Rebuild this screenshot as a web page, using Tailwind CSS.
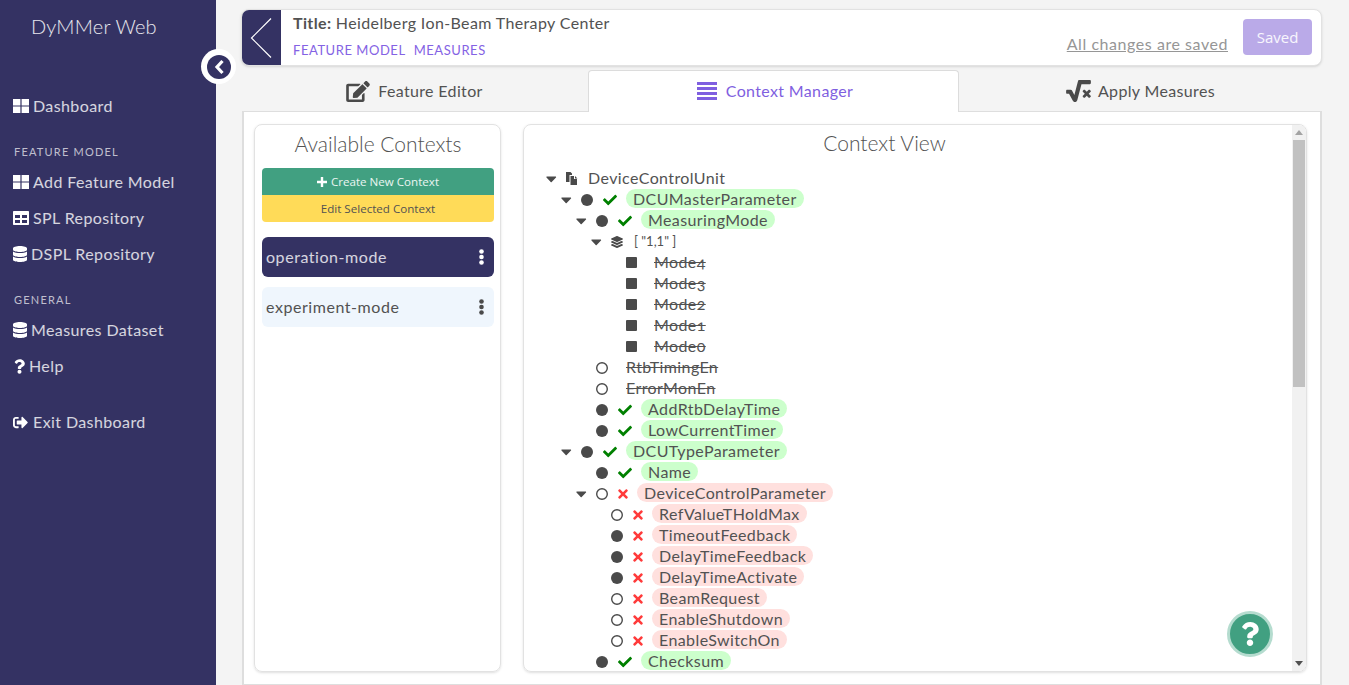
<!DOCTYPE html>
<html lang="en">
<head>
  <meta charset="UTF-8"/>
  <title>DyMMer Web</title>
  <script src="https://cdn.jsdelivr.net/npm/@tailwindcss/browser@4"></script>
</head>
<body class="bg-[#f4f4f4] text-[#525252] font-['Lato',sans-serif] tracking-[0.4px] h-screen overflow-hidden">

  <svg class="hidden">
    <symbol id="check" viewBox="0 0 512 512"><path fill="#008000" d="M173.898 439.404l-166.4-166.4c-9.997-9.997-9.997-26.206 0-36.204l36.203-36.204c9.997-9.998 26.207-9.998 36.204 0L192 312.69 432.095 72.596c9.997-9.997 26.207-9.997 36.204 0l36.203 36.204c9.997 9.997 9.997 26.206 0 36.204l-294.4 294.401c-9.998 9.997-26.207 9.997-36.204-.001z"/></symbol>
    <symbol id="times" viewBox="0 0 352 512"><path fill="#ff3b3b" d="M242.72 256l100.07-100.07c12.28-12.28 12.28-32.19 0-44.48l-22.24-22.24c-12.28-12.28-32.19-12.28-44.48 0L176 189.28 75.93 89.21c-12.28-12.28-32.19-12.28-44.48 0L9.21 111.45c-12.28 12.28-12.28 32.19 0 44.48L109.28 256 9.21 356.07c-12.28 12.28-12.28 32.19 0 44.48l22.24 22.24c12.28 12.28 32.2 12.28 44.48 0L176 322.72l100.07 100.07c12.28 12.28 32.2 12.28 44.48 0l22.24-22.24c12.28-12.28 12.28-32.19 0-44.48L242.72 256z"/></symbol>
    <symbol id="caret" viewBox="0 0 14 14"><path fill="#4a4a4a" d="M3 4.5h8.500c.6 0 .9.7.5 1.100L7.700 9.900c-.3.3-.7.300-1 0L2.500 5.600c-.4-.4-.1-1.100.5-1.100z"/></symbol>
    <symbol id="full" viewBox="0 0 12 12"><circle cx="6" cy="6" r="6" fill="#4a4a4a"/></symbol>
    <symbol id="empty" viewBox="0 0 12 12"><circle cx="6" cy="6" r="5.300" fill="none" stroke="#4a4a4a" stroke-width="1.400"/></symbol>
    <symbol id="database" viewBox="0 0 448 512"><path fill="#fff" d="M448 73.143v45.714C448 159.143 347.667 192 224 192S0 159.143 0 118.857V73.143C0 32.857 100.333 0 224 0s224 32.857 224 73.143zM448 176v102.857C448 319.143 347.667 352 224 352S0 319.143 0 278.857V176c48.125 33.143 136.208 48.572 224 48.572S399.874 209.143 448 176zm0 160v102.857C448 479.143 347.667 512 224 512S0 479.143 0 438.857V336c48.125 33.143 136.208 48.572 224 48.572S399.874 369.143 448 336z"/></symbol>
    <symbol id="grid" viewBox="0 0 16 14"><path fill="#fff" d="M0 0h7.400v6.600H0zM8.600 0H16v6.600H8.600zM0 7.400h7.400V14H0zM8.600 7.400H16V14H8.600z"/></symbol>
  </svg>

  <div class="flex h-full relative">
    <!-- Sidebar -->
    <aside class="w-[216px] shrink-0 bg-[#343263] text-white/80">
      <div class="h-[54px] pb-[2px] flex items-center pl-[31px] text-[20px] font-light text-white/90 tracking-[0.2px]">DyMMer Web</div>
      <nav class="mt-[34px] text-[16px]">
        <a class="h-[36px] flex items-center pl-[13px] gap-[4px]"><svg class="w-[16px] h-[14px]"><use href="#grid"/></svg>Dashboard</a>
        <div class="mt-[16px] h-[24px] flex items-center pl-[14px] text-[11px] tracking-[1.2px] text-white/70">FEATURE MODEL</div>
        <a class="h-[36px] flex items-center pl-[13px] gap-[4px]"><svg class="w-[16px] h-[14px]"><use href="#grid"/></svg>Add Feature Model</a>
        <a class="h-[36px] flex items-center pl-[13px] gap-[4px]">
          <svg class="w-[16px] h-[14px]" viewBox="0 0 16 14"><path fill="#fff" fill-rule="evenodd" d="M1 0h14c.6 0 1 .4 1 1v12c0 .6-.4 1-1 1H1c-.6 0-1-.4-1-1V1c0-.6.4-1 1-1zM2 4v3h5V4zM9 4v3h5V4zM2 9v3h5V9zM9 9v3h5V9z"/></svg>SPL Repository</a>
        <a class="h-[36px] flex items-center pl-[13px] gap-[4px]"><svg class="w-[14px] h-[16px]"><use href="#database"/></svg>DSPL Repository</a>
        <div class="mt-[16px] h-[24px] flex items-center pl-[14px] text-[11px] tracking-[1.2px] text-white/70">GENERAL</div>
        <a class="h-[36px] flex items-center pl-[13px] gap-[4px]"><svg class="w-[14px] h-[16px]"><use href="#database"/></svg>Measures Dataset</a>
        <a class="h-[36px] flex items-center pl-[14px] gap-[4px]">
          <svg class="w-[11px] h-[15px]" viewBox="0 0 384 512"><path fill="#fff" d="M202.021 0C122.202 0 70.503 32.703 29.914 91.026c-7.363 10.58-5.093 25.086 5.178 32.874l43.138 32.709c10.373 7.865 25.132 6.026 33.253-4.148 25.049-31.381 43.63-49.449 82.757-49.449 30.764 0 68.816 19.799 68.816 49.631 0 22.552-18.617 34.134-48.993 51.164-35.423 19.86-82.299 44.576-82.299 106.405V320c0 13.255 10.745 24 24 24h72.471c13.255 0 24-10.745 24-24v-5.773c0-42.86 125.268-44.645 125.268-160.627C377.504 66.256 286.902 0 202.021 0zM192 373.459c-38.196 0-69.271 31.075-69.271 69.271 0 38.195 31.075 69.27 69.271 69.27s69.271-31.075 69.271-69.271-31.075-69.27-69.271-69.27z"/></svg>Help</a>
        <a class="mt-[20px] h-[36px] flex items-center pl-[13px] gap-[5px]">
          <svg class="w-[15px] h-[15px]" viewBox="0 0 512 512"><path fill="#fff" d="M497 273L329 441c-15 15-41 4.500-41-17v-96H152c-13.300 0-24-10.700-24-24v-96c0-13.300 10.700-24 24-24h136V88c0-21.400 25.900-32 41-17l168 168c9.300 9.400 9.300 24.600 0 34zM192 436v-40c0-6.600-5.400-12-12-12H96c-17.700 0-32-14.300-32-32V160c0-17.700 14.300-32 32-32h84c6.600 0 12-5.400 12-12V76c0-6.600-5.400-12-12-12H96c-53 0-96 43-96 96v192c0 53 43 96 96 96h84c6.600 0 12-5.400 12-12z"/></svg>Exit Dashboard</a>
      </nav>
    </aside>

    <!-- Sidebar toggle -->
    <div class="absolute left-[201px] top-[49px] w-[35px] h-[35px] rounded-full bg-white flex items-center justify-center">
      <div class="w-[24px] h-[24px] rounded-full bg-[#343263] flex items-center justify-center">
        <svg class="w-[14px] h-[16px]" viewBox="0 0 14 16"><path fill="none" stroke="#fff" stroke-width="3.200" d="M10.500 2L5 8l5.500 6"/></svg>
      </div>
    </div>

    <main class="flex-1 min-w-0 pl-[25px] pr-[27px] pt-[9px] flex flex-col">
      <!-- Header card -->
      <header class="h-[57px] shrink-0 bg-white border border-[#e2e2e2] rounded-lg shadow-sm flex overflow-hidden">
        <div class="w-[39px] pr-[2px] shrink-0 bg-[#343263] flex items-center justify-center">
          <svg class="w-[24px] h-[42px]" viewBox="0 0 24 42"><path fill="none" stroke="#fff" stroke-width="1.200" d="M22 1.500L2.500 21 22 40.500"/></svg>
        </div>
        <div class="flex-1 pl-[12px] pt-[3px]">
          <div class="text-[16px] leading-[20px] tracking-[0.37px]"><span class="font-bold">Title:</span> Heidelberg Ion-Beam Therapy Center</div>
          <div class="mt-[9px] flex gap-[8px] text-[13px] leading-[16px] tracking-[0.55px] text-[#8462e4]"><span>FEATURE MODEL</span><span>MEASURES</span></div>
        </div>
        <div class="flex items-start">
          <span class="mt-[24px] text-[16px] leading-[20px] underline text-[#969696] tracking-[0.55px]">All changes are saved</span>
          <button class="mt-[9px] ml-[15px] mr-[9px] w-[69px] h-[36px] rounded bg-[#baaae8] text-white/90 text-[15px] tracking-normal font-['Open_Sans',sans-serif]">Saved</button>
        </div>
      </header>

      <!-- Tabs -->
      <div class="mt-[4px] h-[42px] shrink-0 flex text-[16px] tracking-[0.35px] relative z-10">
        <div class="w-[347px] flex items-center justify-center gap-[8px]">
          <svg class="w-[24px] h-[21px]" viewBox="0 0 576 512"><path fill="#4a4a4a" d="M402.6 83.2l90.2 90.2c3.800 3.800 3.800 10 0 13.800L274.400 405.600l-92.800 10.300c-12.400 1.400-22.900-9.100-21.500-21.500l10.300-92.800L388.800 83.200c3.800-3.800 10-3.800 13.800 0zm162-22.900l-48.800-48.800c-15.200-15.200-39.900-15.200-55.200 0l-35.400 35.400c-3.800 3.800-3.800 10 0 13.800l90.200 90.200c3.800 3.800 10 3.800 13.800 0l35.400-35.400c15.200-15.300 15.200-40 0-55.200zM384 346.200V448H64V128h229.800c3.200 0 6.200-1.300 8.500-3.500l40-40c7.600-7.600 2.200-20.500-8.500-20.500H48C21.500 64 0 85.500 0 112v352c0 26.500 21.500 48 48 48h352c26.500 0 48-21.500 48-48V306.200c0-10.700-12.900-16-20.500-8.500l-40 40c-2.200 2.300-3.500 5.300-3.500 8.500z"/></svg>
          <span>Feature Editor</span>
        </div>
        <div class="w-[371px] pb-[2px] pl-[3px] bg-white border border-b-0 border-[#dcdcdc] rounded-t flex items-center justify-center gap-[9px] text-[#7f5fe0]">
          <svg class="w-[20px] h-[20px]" viewBox="0 0 20 20"><path fill="#7f5fe0" d="M0 1h20v3H0zM0 6h20v3H0zM0 11h20v3H0zM0 16h20v3H0z"/></svg>
          <span>Context Manager</span>
        </div>
        <div class="flex-1 flex items-center justify-center gap-[7px]">
          <svg class="w-[25px] h-[22px]" viewBox="0 0 576 512"><path fill="#4a4a4a" d="M571.31 251.31l-22.62-22.62c-6.25-6.25-16.38-6.25-22.63 0L480 274.75l-46.06-46.06c-6.25-6.25-16.38-6.25-22.63 0l-22.62 22.62c-6.25 6.25-6.25 16.38 0 22.63L434.75 320l-46.06 46.06c-6.25 6.25-6.25 16.38 0 22.63l22.62 22.62c6.25 6.25 16.38 6.25 22.63 0L480 365.25l46.06 46.06c6.25 6.25 16.38 6.25 22.63 0l22.62-22.62c6.25-6.25 6.25-16.38 0-22.63L525.25 320l46.06-46.06c6.25-6.25 6.25-16.38 0-22.63zM552 0H307.65c-14.54 0-27.26 9.8-30.95 23.87l-84.79 322.8-58.41-106.1A32.008 32.008 0 0 0 105.47 224H24c-13.25 0-24 10.74-24 24v48c0 13.25 10.75 24 24 24h43.62l88.88 163.73C168.99 503.5 186.3 512 204.94 512c17.27 0 44.44-9 54.28-41.48L357.03 96H552c13.25 0 24-10.75 24-24V24c0-13.26-10.75-24-24-24z"/></svg>
          <span>Apply Measures</span>
        </div>
      </div>

      <!-- Panel -->
      <section class="-mt-px ml-px h-[574px] bg-white border-2 border-[#dedede] border-t border-b flex gap-[22px] pl-[10px] pr-[13px] pt-[12px] pb-[12px]">
        <!-- Available contexts -->
        <div class="w-[247px] shrink-0 border border-[#e2e2e2] rounded-lg shadow-sm pl-[7px] pr-[6px]">
          <h2 class="h-[38px] mb-[5px] flex items-center justify-center text-[21px] font-light tracking-normal">Available Contexts</h2>
          <div class="rounded overflow-hidden text-[11.6px] tracking-normal font-['Open_Sans',sans-serif] text-center">
            <div class="h-[27px] bg-[#41a081] text-white/90 flex items-center justify-center gap-[4px]">
              <svg class="w-[10px] h-[10px]" viewBox="0 0 10 10"><path fill="#fff" d="M3.800 0h2.400v3.800H10v2.400H6.200V10H3.800V6.200H0V3.800h3.800z"/></svg>
              <span>Create New Context</span>
            </div>
            <div class="h-[27px] bg-[#ffdb58] flex items-center justify-center">Edit Selected Context</div>
          </div>
          <div class="mt-[15px] h-[40px] rounded-md bg-[#343263] text-white/80 flex items-center justify-between pl-[4px] pr-[10px] text-[16px] tracking-[0.55px]">
            <span>operation-mode</span>
            <svg class="w-[5px] h-[16px]" viewBox="0 0 5 16"><circle cx="2.500" cy="2.500" r="2.300" fill="#fff"/><circle cx="2.500" cy="8" r="2.300" fill="#fff"/><circle cx="2.500" cy="13.500" r="2.300" fill="#fff"/></svg>
          </div>
          <div class="mt-[10px] h-[40px] rounded-md bg-[#eff6fd] flex items-center justify-between pl-[4px] pr-[10px] text-[16px] tracking-[0.55px]">
            <span>experiment-mode</span>
            <svg class="w-[5px] h-[16px]" viewBox="0 0 5 16"><circle cx="2.500" cy="2.500" r="2.300" fill="#4a4a4a"/><circle cx="2.500" cy="8" r="2.300" fill="#4a4a4a"/><circle cx="2.500" cy="13.500" r="2.300" fill="#4a4a4a"/></svg>
          </div>
        </div>

        <!-- Context view -->
        <div class="flex-1 min-w-0 border border-[#e2e2e2] rounded-lg shadow-sm flex overflow-hidden relative">
          <div class="flex-1 min-w-0 overflow-hidden">
            <h2 class="h-[35px] pr-[47px] flex items-center justify-center text-[21px] font-light tracking-normal">Context View</h2>
            <div class="mt-[7px] pl-[20px] text-[16px] [&_svg]:translate-y-px">
              <!-- level 0 -->
              <div class="h-[21px] flex items-center"><svg class="w-[14px] h-[14px]"><use href="#caret"/></svg>
                <svg class="ml-[8px] w-[12px] h-[13px]" viewBox="0 0 12 13"><path fill="#4a4a4a" d="M0 0h4.500l1.500 1.500V3H3.500v7H0zM4.500 4h3.500v3h3v6H4.500zM9 4l2.500 2.500H9z"/></svg>
                <span class="ml-[10px]">DeviceControlUnit</span></div>
              <!-- level 1 -->
              <div class="h-[21px] flex items-center pl-[15px]"><svg class="w-[14px] h-[14px]"><use href="#caret"/></svg>
                <svg class="ml-[8px] w-[12px] h-[12px]"><use href="#full"/></svg>
                <svg class="ml-[9px] w-[16px] h-[14px]"><use href="#check"/></svg>
                <span class="ml-[8px] h-[19px] leading-[19px] px-[7px] rounded-full bg-[#ccffcc]">DCUMasterParameter</span></div>
              <div class="h-[21px] flex items-center pl-[30px]"><svg class="w-[14px] h-[14px]"><use href="#caret"/></svg>
                <svg class="ml-[8px] w-[12px] h-[12px]"><use href="#full"/></svg>
                <svg class="ml-[9px] w-[16px] h-[14px]"><use href="#check"/></svg>
                <span class="ml-[8px] h-[19px] leading-[19px] px-[7px] rounded-full bg-[#ccffcc]">MeasuringMode</span></div>
              <div class="h-[21px] flex items-center pl-[45px]"><svg class="w-[14px] h-[14px]"><use href="#caret"/></svg>
                <svg class="ml-[8px] w-[12px] h-[12px]" viewBox="0 0 512 512"><path fill="#4a4a4a" d="M12.410 148.020l232.940 105.670c6.800 3.090 14.490 3.090 21.290 0l232.940-105.670c16.550-7.510 16.550-32.520 0-40.030L266.650 2.310a25.607 25.607 0 0 0-21.290 0L12.410 107.980c-16.550 7.510-16.550 32.530 0 40.040zm487.180 88.280l-58.090-26.330-161.640 73.270c-7.560 3.430-15.590 5.170-23.860 5.170s-16.290-1.740-23.860-5.170L70.510 209.970l-58.100 26.330c-16.550 7.500-16.550 32.500 0 40l232.940 105.590c6.800 3.080 14.490 3.080 21.290 0L499.590 276.300c16.550-7.500 16.550-32.500 0-40zm0 127.800l-57.870-26.230-161.860 73.370c-7.560 3.430-15.590 5.170-23.860 5.170s-16.290-1.740-23.860-5.170L70.290 337.870 12.410 364.100c-16.550 7.500-16.550 32.500 0 40l232.940 105.590c6.800 3.080 14.490 3.080 21.290 0L499.590 404.100c16.550-7.500 16.550-32.500 0-40z"/></svg>
                <span class="ml-[11px] mt-[2px] text-[13px] tracking-normal">[ "1,1" ]</span></div>
              <div class="h-[21px] flex items-center pl-[82px]"><span class="w-[11px] h-[11px] translate-y-px rounded-[1px] bg-[#4a4a4a]"></span><span class="ml-[17px] line-through oldstyle-nums">Mode4</span></div>
              <div class="h-[21px] flex items-center pl-[82px]"><span class="w-[11px] h-[11px] translate-y-px rounded-[1px] bg-[#4a4a4a]"></span><span class="ml-[17px] line-through oldstyle-nums">Mode3</span></div>
              <div class="h-[21px] flex items-center pl-[82px]"><span class="w-[11px] h-[11px] translate-y-px rounded-[1px] bg-[#4a4a4a]"></span><span class="ml-[17px] line-through oldstyle-nums">Mode2</span></div>
              <div class="h-[21px] flex items-center pl-[82px]"><span class="w-[11px] h-[11px] translate-y-px rounded-[1px] bg-[#4a4a4a]"></span><span class="ml-[17px] line-through oldstyle-nums">Mode1</span></div>
              <div class="h-[21px] flex items-center pl-[82px]"><span class="w-[11px] h-[11px] translate-y-px rounded-[1px] bg-[#4a4a4a]"></span><span class="ml-[17px] line-through oldstyle-nums">Mode0</span></div>
              <div class="h-[21px] flex items-center pl-[52px]"><svg class="w-[12px] h-[12px]"><use href="#empty"/></svg><span class="ml-[18px] line-through">RtbTimingEn</span></div>
              <div class="h-[21px] flex items-center pl-[52px]"><svg class="w-[12px] h-[12px]"><use href="#empty"/></svg><span class="ml-[18px] line-through">ErrorMonEn</span></div>
              <div class="h-[21px] flex items-center pl-[52px]"><svg class="w-[12px] h-[12px]"><use href="#full"/></svg>
                <svg class="ml-[9px] w-[16px] h-[14px]"><use href="#check"/></svg>
                <span class="ml-[8px] h-[19px] leading-[19px] px-[7px] rounded-full bg-[#ccffcc]">AddRtbDelayTime</span></div>
              <div class="h-[21px] flex items-center pl-[52px]"><svg class="w-[12px] h-[12px]"><use href="#full"/></svg>
                <svg class="ml-[9px] w-[16px] h-[14px]"><use href="#check"/></svg>
                <span class="ml-[8px] h-[19px] leading-[19px] px-[7px] rounded-full bg-[#ccffcc]">LowCurrentTimer</span></div>
              <div class="h-[21px] flex items-center pl-[15px]"><svg class="w-[14px] h-[14px]"><use href="#caret"/></svg>
                <svg class="ml-[8px] w-[12px] h-[12px]"><use href="#full"/></svg>
                <svg class="ml-[9px] w-[16px] h-[14px]"><use href="#check"/></svg>
                <span class="ml-[8px] h-[19px] leading-[19px] px-[7px] rounded-full bg-[#ccffcc]">DCUTypeParameter</span></div>
              <div class="h-[21px] flex items-center pl-[52px]"><svg class="w-[12px] h-[12px]"><use href="#full"/></svg>
                <svg class="ml-[9px] w-[16px] h-[14px]"><use href="#check"/></svg>
                <span class="ml-[8px] h-[19px] leading-[19px] px-[7px] rounded-full bg-[#ccffcc]">Name</span></div>
              <div class="h-[21px] flex items-center pl-[30px]"><svg class="w-[14px] h-[14px]"><use href="#caret"/></svg>
                <svg class="ml-[8px] w-[12px] h-[12px]"><use href="#empty"/></svg>
                <svg class="ml-[9px] w-[12px] h-[14px]"><use href="#times"/></svg>
                <span class="ml-[8px] h-[19px] leading-[19px] px-[7px] rounded-full bg-[#ffe0de]">DeviceControlParameter</span></div>
              <div class="h-[21px] flex items-center pl-[67px]"><svg class="w-[12px] h-[12px]"><use href="#empty"/></svg>
                <svg class="ml-[9px] w-[12px] h-[14px]"><use href="#times"/></svg>
                <span class="ml-[8px] h-[19px] leading-[19px] px-[7px] rounded-full bg-[#ffe0de]">RefValueTHoldMax</span></div>
              <div class="h-[21px] flex items-center pl-[67px]"><svg class="w-[12px] h-[12px]"><use href="#full"/></svg>
                <svg class="ml-[9px] w-[12px] h-[14px]"><use href="#times"/></svg>
                <span class="ml-[8px] h-[19px] leading-[19px] px-[7px] rounded-full bg-[#ffe0de]">TimeoutFeedback</span></div>
              <div class="h-[21px] flex items-center pl-[67px]"><svg class="w-[12px] h-[12px]"><use href="#full"/></svg>
                <svg class="ml-[9px] w-[12px] h-[14px]"><use href="#times"/></svg>
                <span class="ml-[8px] h-[19px] leading-[19px] px-[7px] rounded-full bg-[#ffe0de]">DelayTimeFeedback</span></div>
              <div class="h-[21px] flex items-center pl-[67px]"><svg class="w-[12px] h-[12px]"><use href="#full"/></svg>
                <svg class="ml-[9px] w-[12px] h-[14px]"><use href="#times"/></svg>
                <span class="ml-[8px] h-[19px] leading-[19px] px-[7px] rounded-full bg-[#ffe0de]">DelayTimeActivate</span></div>
              <div class="h-[21px] flex items-center pl-[67px]"><svg class="w-[12px] h-[12px]"><use href="#empty"/></svg>
                <svg class="ml-[9px] w-[12px] h-[14px]"><use href="#times"/></svg>
                <span class="ml-[8px] h-[19px] leading-[19px] px-[7px] rounded-full bg-[#ffe0de]">BeamRequest</span></div>
              <div class="h-[21px] flex items-center pl-[67px]"><svg class="w-[12px] h-[12px]"><use href="#empty"/></svg>
                <svg class="ml-[9px] w-[12px] h-[14px]"><use href="#times"/></svg>
                <span class="ml-[8px] h-[19px] leading-[19px] px-[7px] rounded-full bg-[#ffe0de]">EnableShutdown</span></div>
              <div class="h-[21px] flex items-center pl-[67px]"><svg class="w-[12px] h-[12px]"><use href="#empty"/></svg>
                <svg class="ml-[9px] w-[12px] h-[14px]"><use href="#times"/></svg>
                <span class="ml-[8px] h-[19px] leading-[19px] px-[7px] rounded-full bg-[#ffe0de]">EnableSwitchOn</span></div>
              <div class="h-[21px] flex items-center pl-[52px]"><svg class="w-[12px] h-[12px]"><use href="#full"/></svg>
                <svg class="ml-[9px] w-[16px] h-[14px]"><use href="#check"/></svg>
                <span class="ml-[8px] h-[19px] leading-[19px] px-[7px] rounded-full bg-[#ccffcc]">Checksum</span></div>
            </div>
          </div>
          <!-- Scrollbar -->
          <div class="w-[14px] shrink-0 bg-[#f1f1f1] flex flex-col items-center relative">
            <svg class="mt-[5px] w-[8px] h-[5px]" viewBox="0 0 8 5"><path fill="#a3a3a3" d="M4 0l4 5H0z"/></svg>
            <div class="mt-[5px] w-[12px] h-[247px] bg-[#c1c1c1]"></div>
            <svg class="mt-auto mb-[5px] w-[8px] h-[5px]" viewBox="0 0 8 5"><path fill="#505050" d="M0 0h8L4 5z"/></svg>
          </div>
          <!-- Help bubble -->
          <div class="absolute left-[703px] top-[486px] w-[46px] h-[46px] rounded-full bg-[#41a081] border-[3px] border-[#b5dccf] flex items-center justify-center">
            <svg class="w-[18px] h-[24px]" viewBox="0 0 384 512"><path fill="#fff" d="M202.021 0C122.202 0 70.503 32.703 29.914 91.026c-7.363 10.58-5.093 25.086 5.178 32.874l43.138 32.709c10.373 7.865 25.132 6.026 33.253-4.148 25.049-31.381 43.63-49.449 82.757-49.449 30.764 0 68.816 19.799 68.816 49.631 0 22.552-18.617 34.134-48.993 51.164-35.423 19.86-82.299 44.576-82.299 106.405V320c0 13.255 10.745 24 24 24h72.471c13.255 0 24-10.745 24-24v-5.773c0-42.86 125.268-44.645 125.268-160.627C377.504 66.256 286.902 0 202.021 0zM192 373.459c-38.196 0-69.271 31.075-69.271 69.271 0 38.195 31.075 69.27 69.271 69.27s69.271-31.075 69.271-69.271-31.075-69.27-69.271-69.27z"/></svg>
          </div>
        </div>
      </section>
    </main>
  </div>
</body>
</html>
